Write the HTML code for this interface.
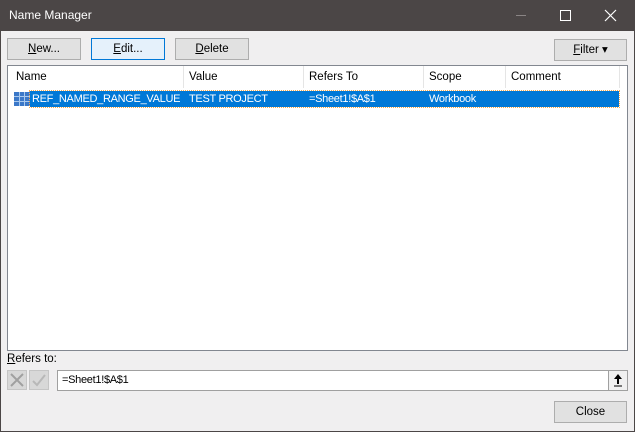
<!DOCTYPE html>
<html><head><style>
*{box-sizing:border-box;margin:0;padding:0}
body{width:635px;height:432px;overflow:hidden;background:#f0eff0;font-family:"Liberation Sans",sans-serif;font-size:11px;color:#000;position:relative}
.win{position:absolute;left:0;top:0;width:635px;height:432px;border:1px solid #4b4646;}
.title{position:absolute;left:0;top:0;width:635px;height:31px;background:#4b4646;color:#fff;font-size:12px}
.abs{position:absolute}
.btn{position:absolute;height:22px;background:#e1e1e1;border:1px solid #adadad;text-align:center;line-height:20px;font-size:11.5px}
.list{position:absolute;left:7px;top:65px;width:621px;height:286px;background:#fff;border:1px solid #828790}
.hdr{position:absolute;top:5px;font-size:11.5px;color:#000}
.sep{position:absolute;top:0;width:1px;height:22px;background:#e5e5e5}
.row{position:absolute;left:22px;top:25px;width:589px;height:16px;background:#0078d7;outline:1px dotted #f7a84a;color:#fff;font-size:11px}
.row span{position:absolute;top:0;line-height:16px;letter-spacing:-0.3px}
</style></head><body>
<div class="title">
<div class="abs" style="left:9px;top:8px">Name Manager</div>
<div class="abs" style="left:516px;top:15px;width:10px;height:1px;background:#8a8585"></div>
<div class="abs" style="left:560px;top:10px;width:11px;height:11px;border:1px solid #fff"></div>
<svg class="abs" style="left:604px;top:9px" width="13" height="13"><path d="M1 1L12 12M12 1L1 12" stroke="#fff" stroke-width="1.2"/></svg>
</div>
<div class="win"></div>
<div class="btn" style="left:7px;top:38px;width:74px"><u>N</u>ew...</div>
<div class="btn" style="left:91px;top:38px;width:74px;background:#e5f1fb;border-color:#0078d7"><u>E</u>dit...</div>
<div class="btn" style="left:175px;top:38px;width:74px"><u>D</u>elete</div>
<div class="btn" style="left:554px;top:39px;width:73px"><u>F</u>ilter ▾</div>
<div class="list">
<div class="hdr" style="left:8px">Name</div>
<div class="sep" style="left:175px"></div>
<div class="hdr" style="left:181px">Value</div>
<div class="sep" style="left:295px"></div>
<div class="hdr" style="left:301px">Refers To</div>
<div class="sep" style="left:415px"></div>
<div class="hdr" style="left:421px">Scope</div>
<div class="sep" style="left:497px"></div>
<div class="hdr" style="left:503px">Comment</div>
<div class="sep" style="left:611px"></div>
<svg class="abs" style="left:6px;top:26px" width="16" height="14"><rect x="0" y="0" width="16" height="14" fill="#3b78c8"/><path d="M0 4.5H16M0 9.5H16M5.5 0V14M10.5 0V14" stroke="#a9c9ee" stroke-width="1"/></svg>
<div class="row">
<span style="left:2px">REF_NAMED_RANGE_VALUE</span>
<span style="left:159px">TEST PROJECT</span>
<span style="left:279px">=Sheet1!$A$1</span>
<span style="left:399px">Workbook</span>
</div>
</div>
<div class="abs" style="left:7px;top:353px;font-size:11.5px"><u>R</u>efers to:</div>
<div class="abs" style="left:7px;top:370px;width:20px;height:20px;background:#d8d8d8;border:1px solid #c5c5c5"><svg width="18" height="18"><path d="M3 3L15 15M15 3L3 15" stroke="#a0a0a0" stroke-width="2"/></svg></div>
<div class="abs" style="left:29px;top:370px;width:20px;height:20px;background:#d8d8d8;border:1px solid #c5c5c5"><svg width="18" height="18"><path d="M3 10L7 14L15 4" stroke="#b8b8b8" stroke-width="2" fill="none"/></svg></div>
<div class="abs" style="left:57px;top:370px;width:571px;height:21px;background:#fff;border:1px solid #a0a0a0;padding-left:4px;line-height:19px;letter-spacing:-0.3px">=Sheet1!$A$1
<div class="abs" style="right:0;top:0;width:19px;height:19px;background:#f0f0f0;border-left:1px solid #a0a0a0"><svg width="18" height="18"><path d="M9 3L5 8H8V13H10V8H13Z" fill="#000"/><path d="M5 15H13" stroke="#000"/></svg></div>
</div>
<div class="btn" style="left:554px;top:401px;width:73px">Close</div>
</body></html>
